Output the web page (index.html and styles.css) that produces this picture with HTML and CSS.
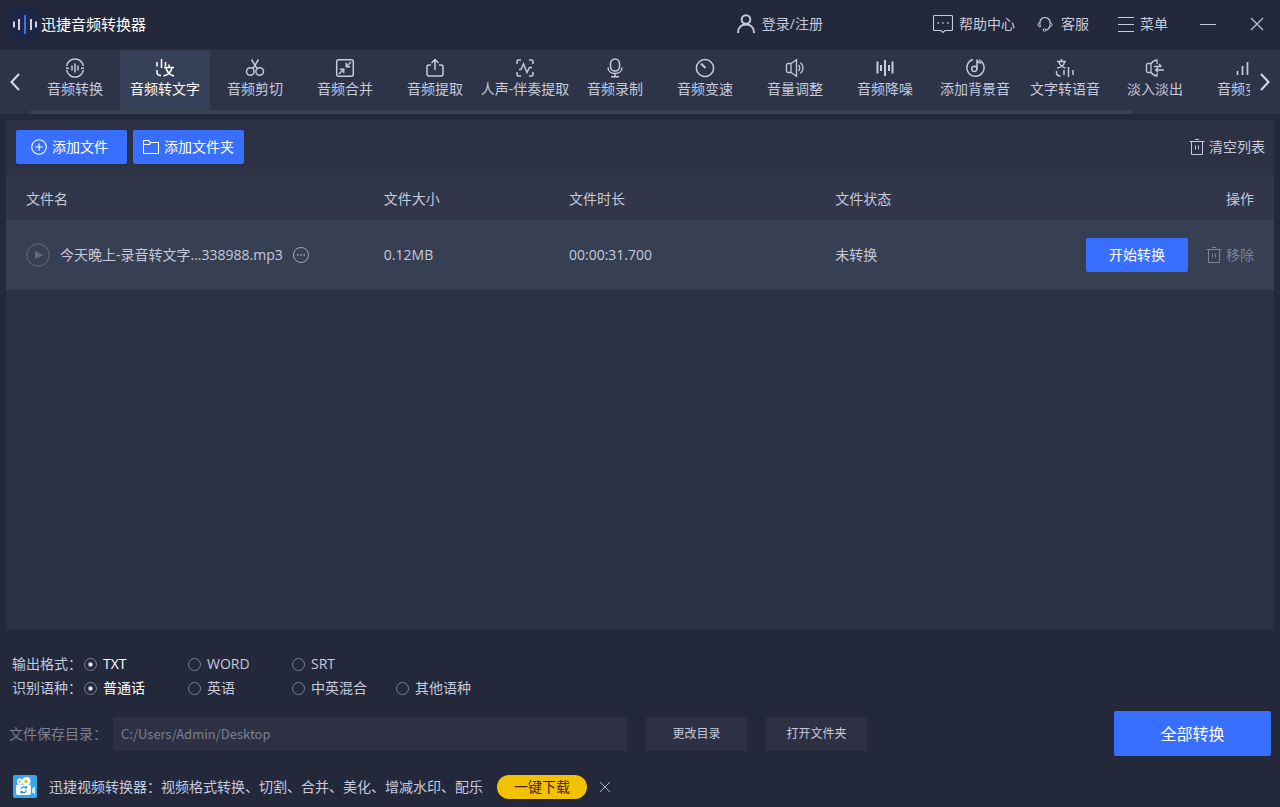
FILE: index.html
```html
<!DOCTYPE html>
<html lang="zh-CN">
<head>
<meta charset="utf-8">
<meta name="viewport" content="width=device-width, initial-scale=1">
<title>迅捷音频转换器</title>
<link rel="stylesheet" href="styles.css">
</head>
<body>
<header class="titlebar">
  <svg class="logo" viewBox="0 0 32 32" aria-hidden="true"><rect width="32" height="32" rx="5" fill="#1d2645"/><g stroke="#fff" stroke-width="1.600"><path d="M5 13.500v6M10 11v11M22 11v11M27 13.500v6" /></g><path d="M16 7v19" stroke="#3b70ff" stroke-width="2"/></svg>
  <h1 class="app-name">迅捷音频转换器</h1>
  <button class="link-btn login" type="button"><svg class="icon" viewBox="0 0 20 20"><g stroke-width="2"><circle cx="10" cy="5.500" r="4.300"/><path d="M2 19c0-5.500 3.400-8.500 8-8.500s8 3 8 8.500"/></g></svg>登录/注册</button>
  <button class="link-btn help" type="button"><svg class="icon" viewBox="0 0 20 20"><path d="M1.500 1.500h17a1 1 0 0 1 1 1v13a1 1 0 0 1-1 1H12l-2 2-2-2H1.500a1 1 0 0 1-1-1v-13a1 1 0 0 1 1-1z" stroke-width="1.100"/><path d="M4.500 9H6M9.250 9h1.500M14 9h1.500" stroke-width="1.500"/></svg>帮助中心</button>
  <button class="link-btn service" type="button"><svg class="icon icon-16" viewBox="0 0 16 16"><path d="M3.500 11C1.600 6 3.600 1.500 8 1.500s6.400 4.500 4.500 9.500c-.8 2-2 3-3.500 3" stroke-width="1.200"/><path d="M2.500 6.500c-2 .5-2 4 .5 4.500M13.500 6.500c2 .5 2 4-.5 4.500" stroke-width="1"/><circle cx="7.500" cy="14" r="1.300" stroke-width="1"/></svg>客服</button>
  <button class="link-btn menu" type="button"><svg class="icon icon-16" viewBox="0 0 16 16"><path d="M0 1.500h16M0 8.500h16M0 15.500h16" stroke-width="1"/></svg>菜单</button>
  <button class="link-btn minimize" type="button" aria-label="最小化"><svg class="icon icon-16" viewBox="0 0 16 16"><path d="M0 8.500h16" stroke-width="1"/></svg></button>
  <button class="link-btn close" type="button" aria-label="关闭"><svg class="icon icon-14" viewBox="0 0 14 14"><path d="M1 1l12 12M13 1L1 13" stroke-width="1.100"/></svg></button>
</header>

<nav class="tabbar" aria-label="功能">
  <button class="arrow" type="button" aria-label="向左"><svg class="icon-arrow" viewBox="0 0 10 18"><path d="M9 1L1.500 9 9 17"/></svg></button>
  <div class="tabs-view">
    <div class="tabs">
      <button class="tab" type="button"><svg class="icon" viewBox="0 0 20 20"><path d="M1.700 8A8.400 8.400 0 0 1 18.300 8M18.300 12A8.400 8.400 0 0 1 1.700 12"/><path d="M1 10.200h3M16 10.200h3M7 7.500v5M10 5.500v9M13 7.500v5"/></svg>音频转换</button>
      <button class="tab tab-active" type="button" aria-current="page"><svg class="icon" viewBox="0 0 20 20"><path d="M2 4v4.500M6.500 1v9M10.500 4v4.500M2 12v2.500q0 3 4 3"/><path d="M9 9.500h10M14 6.500V9M11 10c1 4 4 7 8 8M17 10c-1 4-4.500 7-8.500 8"/></svg>音频转文字</button>
      <button class="tab" type="button"><svg class="icon" viewBox="0 0 20 20"><circle cx="5.300" cy="13.500" r="3.800"/><circle cx="14.700" cy="13.500" r="3.800"/><path d="M6.500 1.500l5.500 9M13.500 1.500l-5.500 9"/></svg>音频剪切</button>
      <button class="tab" type="button"><svg class="icon" viewBox="0 0 20 20"><rect x="1.700" y="1.700" width="16.600" height="16.600" rx="2"/><path d="M16 4l-4.700 4.700M11.300 4.700v4h4M4 16l4.700-4.700M4.700 11.300h4v4"/></svg>音频合并</button>
      <button class="tab" type="button"><svg class="icon" viewBox="0 0 20 20"><path d="M6 7H4q-2 0-2 2v7q0 2 2 2h12q2 0 2-2V9q0-2-2-2h-2M10 12V2M6.500 5L10 1.500 13.500 5"/></svg>音频提取</button>
      <button class="tab" type="button"><svg class="icon" viewBox="0 0 20 20"><path d="M2 6V3.500q0-1.500 1.500-1.500H6M14 2h2.500Q18 2 18 3.500V6M18 14v2.500q0 1.500-1.500 1.500H14M6 18H3.500Q2 18 2 16.500V14"/><path d="M4 11.500h2L8.500 6l3.500 8.500 2.500-5H17"/></svg>人声-伴奏提取</button>
      <button class="tab" type="button"><svg class="icon" viewBox="0 0 20 20"><rect x="5.500" y="1" width="9" height="12" rx="4.500"/><path d="M3 9.500c0 8 14 8 14 0M10 15.500v3M6 18.700h8"/></svg>音频录制</button>
      <button class="tab" type="button"><svg class="icon" viewBox="0 0 20 20"><circle cx="10" cy="10" r="8.600"/><path d="M6 5.500l4.500 4.500" stroke-width="2"/></svg>音频变速</button>
      <button class="tab" type="button"><svg class="icon" viewBox="0 0 20 20"><path d="M6 5.500H3q-1.500 0-1.500 1.500v6q0 1.500 1.500 1.500h3zM6 5.500l5.500-3.700v16.400L6 14.500zM13.500 7q2.500 3 0 6M15.500 4.500q5 5.500 0 11" stroke-width="1.300"/></svg>音量调整</button>
      <button class="tab" type="button"><svg class="icon" viewBox="0 0 20 20"><path d="M2.500 3.500v12M6 7v6M10 2v16M14 7v6M17.500 3.500v12" stroke-width="2"/></svg>音频降噪</button>
      <button class="tab" type="button"><svg class="icon" viewBox="0 0 20 20"><path d="M8 1.500a8.600 8.600 0 1 0 6 .4"/><circle cx="9.300" cy="10.800" r="2.600"/><path d="M12 10.800V1.500q0 3 4 3.500"/></svg>添加背景音</button>
      <button class="tab" type="button"><svg class="icon" viewBox="0 0 20 20"><path d="M2 3.500h9M6 1l1 2.500M4 4c.5 3 3 5 6.500 6M9.500 4C9 7 6 9.500 2 10M1.500 13v1.500q0 3.500 4 3.500M9 12v5M13.500 9v10M18 12v5"/></svg>文字转语音</button>
      <button class="tab" type="button"><svg class="icon" viewBox="0 0 20 20"><path d="M6 5.500H3q-1.500 0-1.500 1.500v6q0 1.500 1.500 1.500h3zM6 5.500Q9 2 12 2v4M6 14.500Q9 18 12 18v-3M9 8.500h7M14 6l2.500 2.500M19 12h-8M13 9.700L10.700 12 13 14.300" stroke-width="1.300"/></svg>淡入淡出</button>
      <button class="tab" type="button"><svg class="icon" viewBox="0 0 20 20"><path d="M2.500 13v4M7.500 8v9M12.500 4v13" stroke-width="1.700"/></svg>音频变声</button>
    </div>
    <div class="scroll-thumb"></div>
  </div>
  <button class="arrow" type="button" aria-label="向右"><svg class="icon-arrow" viewBox="0 0 10 18"><path d="M1 1l7.500 8L1 17"/></svg></button>
</nav>

<main class="panel">
  <div class="toolbar">
    <button class="primary add-btn add-file" type="button"><svg class="icon icon-16" viewBox="0 0 16 16"><g stroke-width="1.100"><circle cx="8" cy="8" r="7.300"/><path d="M8 4.200v7.600M4.200 8h7.600"/></g></svg>添加文件</button>
    <button class="primary add-btn" type="button"><svg class="icon icon-16" viewBox="0 0 16 16"><path d="M.5 14.500v-13h5l2 2h8v11zM.5 5.500h6l1.500-2" stroke-width="1.100"/></svg>添加文件夹</button>
    <button class="link-btn clear" type="button"><svg class="icon icon-16" viewBox="0 0 16 16"><path d="M.5 2.500h15M6 .5h4M2.500 2.500v13h11v-13M6.500 6.500v4M9.500 6.500v4" stroke-width="1"/></svg>清空列表</button>
  </div>
  <table class="files">
    <thead>
      <tr><th class="col-name">文件名</th><th class="col-size">文件大小</th><th class="col-time">文件时长</th><th class="col-state">文件状态</th><th class="col-action">操作</th></tr>
    </thead>
    <tbody>
      <tr>
        <td><div class="cell"><button class="link-btn dim" type="button" aria-label="播放"><svg class="icon-play" viewBox="0 0 24 24"><circle cx="12" cy="12" r="11.200" fill="none" stroke="currentColor"/><path d="M9 8l8 4-8 4z" fill="currentColor"/></svg></button><span class="file-name">今天晚上-录音转文字...338988.mp3</span><button class="link-btn more" type="button" aria-label="更多"><svg class="icon icon-16" viewBox="0 0 16 16"><circle cx="8" cy="8" r="7.500" stroke-width="1"/><path d="M4 8h1.500M7.250 8h1.500M10.500 8H12" stroke-width="1.500"/></svg></button></div></td>
        <td>0.12MB</td>
        <td>00:00:31.700</td>
        <td>未转换</td>
        <td><div class="cell actions"><button class="primary start" type="button">开始转换</button><button class="link-btn remove" type="button"><svg class="icon icon-16" viewBox="0 0 16 16"><path d="M.5 2.500h15M6 .5h4M2.500 2.500v13h11v-13M6.500 6.500v4M9.500 6.500v4" stroke-width="1"/></svg>移除</button></div></td>
      </tr>
    </tbody>
  </table>
</main>

<footer class="bottom">
  <div class="options" role="radiogroup" aria-label="输出格式">
    <span>输出格式：</span>
    <label class="option"><input class="radio" type="radio" name="format" checked><span>TXT</span></label>
    <label class="option"><input class="radio" type="radio" name="format"><span>WORD</span></label>
    <label class="option"><input class="radio" type="radio" name="format"><span>SRT</span></label>
  </div>
  <div class="options" role="radiogroup" aria-label="识别语种">
    <span>识别语种：</span>
    <label class="option"><input class="radio" type="radio" name="language" checked><span>普通话</span></label>
    <label class="option"><input class="radio" type="radio" name="language"><span>英语</span></label>
    <label class="option"><input class="radio" type="radio" name="language"><span>中英混合</span></label>
    <label class="option"><input class="radio" type="radio" name="language"><span>其他语种</span></label>
  </div>
  <div class="save">
    <label class="save-label" for="dir">文件保存目录：</label>
    <input class="path" id="dir" type="text" value="C:/Users/Admin/Desktop">
    <button class="secondary" type="button">更改目录</button>
    <button class="secondary" type="button">打开文件夹</button>
    <button class="primary convert-all" type="button">全部转换</button>
  </div>
  <div class="promo">
    <svg class="promo-icon" viewBox="0 0 24 24" aria-hidden="true"><rect y="0" width="24" height="23" rx="2" fill="#39a5ea"/><circle cx="7" cy="6.500" r="3" fill="#fff"/><circle cx="13.500" cy="6" r="4" fill="#fff"/><circle cx="6.500" cy="6.500" r="1.300" fill="#e9a936"/><circle cx="13" cy="6.500" r="1.700" fill="#f0b32e"/><rect x="3" y="9.500" width="15" height="10.500" rx="2" fill="#fff"/><path d="M19 13.500l3-2v8l-3-2z" fill="#c9ecff"/><path d="M8 14a3 3 0 0 1 5-1.300M13.500 15.500a3 3 0 0 1-5 1.300M13.500 11v2h-2M8 18.500v-2h2" fill="none" stroke="#2c8fdc" stroke-width="1.200"/></svg>
    <span>迅捷视频转换器：视频格式转换、切割、合并、美化、增减水印、配乐</span>
    <button class="download" type="button">一键下载</button>
    <button class="link-btn dismiss" type="button" aria-label="关闭推广"><svg class="icon icon-12" viewBox="0 0 12 12"><path d="M1 1l10 10M11 1L1 11" stroke-width="1"/></svg></button>
  </div>
</footer>
</body>
</html>
```
FILE: styles.css
```css
* {
  box-sizing: border-box;
}

body {
  margin: 0;
  min-height: 100vh;
  display: flex;
  flex-direction: column;
  background: #24283b;
  color: #c5cadd;
  font: 14px/20px "Open Sans", "Noto Sans CJK SC", sans-serif;
}

button,
input {
  font: inherit;
  color: inherit;
  margin: 0;
}

button {
  border: 0;
  padding: 0;
  background: none;
  white-space: nowrap;
  cursor: pointer;
}

.icon {
  flex: none;
  width: 20px;
  height: 20px;
  fill: none;
  stroke: currentColor;
  stroke-width: 1.5;
}

.icon-16 {
  width: 16px;
  height: 16px;
}

.icon-14 {
  width: 14px;
  height: 14px;
}

.icon-12 {
  width: 12px;
  height: 12px;
}

.link-btn {
  display: flex;
  align-items: center;
  gap: 6px;
}

/* Title bar */
.titlebar {
  display: flex;
  align-items: center;
  height: 50px;
  padding: 0 16px 2px 9px;
}

.logo {
  width: 32px;
  height: 32px;
}

.app-name {
  margin: 0;
  color: #fff;
  font-size: 15px;
  font-weight: 400;
}

.login {
  margin-left: auto;
}

.help {
  margin-left: 110px;
}

.service {
  margin-left: 22px;
  gap: 8px;
}

.menu {
  margin-left: 29px;
}

.minimize {
  margin-left: 32px;
}

.close {
  margin-left: 34px;
}

/* Feature tabs */
.tabbar {
  display: flex;
  background: #2d3448;
}

.arrow {
  flex: none;
  width: 30px;
}

.icon-arrow {
  display: block;
  width: 10px;
  height: 18px;
  margin: 0 auto;
  fill: none;
  stroke: #d5d9e6;
  stroke-width: 2;
}

.tabs-view {
  flex: 1;
  min-width: 0;
  overflow: hidden;
}

.tabs {
  display: flex;
}

.tab {
  flex: none;
  display: flex;
  flex-direction: column;
  align-items: center;
  gap: 1px;
  width: 90px;
  height: 60px;
  padding-top: 8px;
}

.tab-active {
  background: #364058;
  color: #fff;
}

.scroll-thumb {
  width: 90.3%;
  height: 4px;
  border-radius: 2px;
  background: #3b4254;
}

/* File list */
.panel {
  flex: 1;
  margin: 6px 6px 0;
  background: #2c3144;
}

.toolbar {
  display: flex;
  align-items: center;
  gap: 6px;
  height: 55px;
  padding: 0 9px 2px 10px;
}

.primary {
  border-radius: 2px;
  background: #386fff;
  color: #fff;
}

.add-btn {
  display: flex;
  align-items: center;
  justify-content: center;
  gap: 5px;
  width: 111px;
  height: 34px;
}

.add-file {
  padding-right: 4px;
}

.clear {
  margin-left: auto;
  gap: 4px;
}

.files {
  width: 100%;
  table-layout: fixed;
  border-collapse: collapse;
}

.files th,
.files td {
  padding: 0;
  text-align: left;
  font-weight: 400;
}

.files th:first-child,
.files td:first-child {
  padding-left: 20px;
}

.files th:last-child,
.files td:last-child {
  padding-right: 20px;
  text-align: right;
}

.files thead tr {
  height: 45px;
  background: #31364a;
}

.files th {
  padding-top: 2px;
}

.files tbody tr {
  height: 70px;
  background: #373f53;
}

.files .col-name {
  width: 29.8%;
}

.files .col-size {
  width: 14.6%;
}

.files .col-time {
  width: 21%;
}

.files .col-state {
  width: 17%;
}

.cell {
  display: flex;
  align-items: center;
  gap: 10px;
}

.icon-play {
  width: 24px;
  height: 24px;
}

.dim {
  color: #626a7e;
}

.more {
  color: #a0a7ba;
}

.actions {
  justify-content: flex-end;
  gap: 18px;
}

.start {
  width: 102px;
  height: 34px;
}

.remove {
  gap: 4px;
  color: #7d8497;
}

/* Output settings */
.bottom {
  padding: 22px 9px 8px;
}

.options {
  display: grid;
  grid-template-columns: 72px repeat(4, 104px);
  align-items: center;
  height: 24px;
  padding-left: 3px;
  white-space: nowrap;
}

.option {
  display: flex;
  align-items: center;
  gap: 6px;
}

.radio {
  appearance: none;
  width: 13px;
  height: 13px;
  border: 1px solid #7d8394;
  border-radius: 50%;
}

.radio:checked {
  background: radial-gradient(circle, #fff 1px, transparent 3px);
}

.radio:checked + span {
  color: #fff;
}

.save {
  display: flex;
  align-items: center;
  gap: 19px;
  margin-top: 11px;
}

.save-label {
  flex: none;
  width: 85px;
  color: #7b8092;
  white-space: nowrap;
}

.path {
  flex: 0 1 514px;
  min-width: 0;
  height: 34px;
  padding: 0 8px;
  border: 0;
  border-radius: 2px;
  background: #2d3143;
  color: #7b8092;
  font-family: "Noto Sans CJK SC", sans-serif;
  font-size: 13px;
}

.secondary {
  flex: none;
  width: 101px;
  height: 34px;
  border-radius: 2px;
  background: #2d3143;
  font-size: 12px;
}

.convert-all {
  flex: none;
  width: 157px;
  height: 45px;
  margin-left: auto;
  font-size: 16px;
}

.promo {
  display: flex;
  align-items: center;
  margin-top: 19px;
  padding-left: 4px;
}

.promo-icon {
  width: 24px;
  height: 24px;
  margin-right: 12px;
}

.download {
  width: 90px;
  height: 24px;
  margin: 0 12px 0 14px;
  border-radius: 12px;
  background: #f2c200;
  color: #4a1c10;
}

.dismiss {
  color: #a9aec0;
}
```
